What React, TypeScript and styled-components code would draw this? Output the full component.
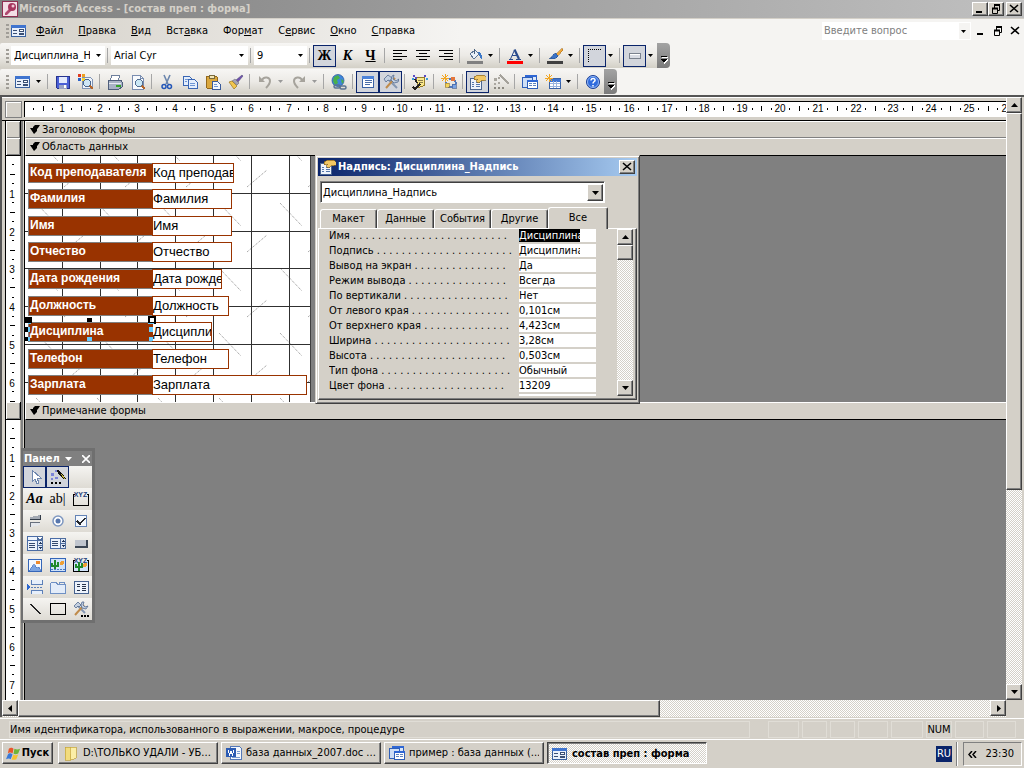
import React from 'react';
import styled, { createGlobalStyle, css } from 'styled-components';

const face = '#d4d0c8';
const navy = '#0a246a';
const hatch = css`
  background: repeating-conic-gradient(#ffffff 0 25%, ${face} 0 50%) 0 0 / 2px 2px;
`;
const raised = css`
  background: ${face};
  border: 1px solid;
  border-color: #ffffff #404040 #404040 #ffffff;
  box-shadow: inset -1px -1px 0 #808080;
`;

const Global = createGlobalStyle`
  *, *::before, *::after { box-sizing: border-box; }
  body {
    margin: 0;
    background: ${face};
    color: #000;
    font: 11px/14px "DejaVu Sans Condensed", "DejaVu Sans", sans-serif;
  }
  button, select, input { font: inherit; color: inherit; margin: 0; padding: 0; border: 0; border-radius: 0; background: none; }
  button { display: flex; align-items: center; justify-content: center; flex: none; }
  svg { display: block; flex: none; }
`;

/* ---------- icons ---------- */

const art: Record<string, React.ReactNode> = {
  key: (
    <>
      <rect width="16" height="16" fill="#8f2f52" />
      <rect x="1" y="1" width="14" height="14" fill="#f3dfe6" />
      <path d="M3 12l5-5 2 2-5 5H3z" fill="#b04a70" />
      <circle cx="10" cy="6" r="4" fill="#a8365e" />
      <circle cx="11" cy="5" r="1.5" fill="#f0c8d6" />
    </>
  ),
  form: (
    <>
      <rect x="0.5" y="2.500" width="14" height="11" fill="#e9f0fb" stroke="#38609f" />
      <rect x="0" y="2" width="15" height="3" fill="#3f74cf" />
      <path d="M2 7.500h4M2 10.500h4" stroke="#3a4f74" />
      <rect x="8.500" y="6.500" width="4" height="2" fill="#fff" stroke="#3a4f74" />
      <rect x="8.500" y="10.500" width="4" height="1" fill="#fff" stroke="#3a4f74" />
    </>
  ),
  save: (
    <>
      <path d="M1.500 2.500h13v12h-12l-1-1z" fill="#4a5fd6" stroke="#27348f" />
      <rect x="4" y="3" width="8" height="6" fill="#e4eafc" />
      <rect x="4" y="11" width="8" height="4" fill="#9aa2c4" />
      <rect x="9" y="11" width="2" height="3" fill="#fff" />
    </>
  ),
  search: (
    <>
      <path d="M4 3h8l2 2v9H4z" fill="#eef3fb" stroke="#7f93b5" />
      <rect x="0" y="0" width="3" height="3" fill="#e03a1e" />
      <rect x="4" y="0" width="3" height="3" fill="#f0a020" />
      <rect x="0" y="4" width="3" height="3" fill="#2c62c8" />
      <rect x="4" y="4" width="3" height="3" fill="#f4d030" />
      <circle cx="9" cy="9" r="3.5" fill="#cfe6f6" stroke="#49688f" />
      <path d="M12 12l3 3" stroke="#b5662a" strokeWidth="2" />
    </>
  ),
  print: (
    <>
      <path d="M5 1h8l-2 6H3z" fill="#fff" stroke="#6d7f9d" />
      <path d="M1 7l2-1h11l1 2v5l-3 2H1z" fill="#a9b3c6" stroke="#4f5e7b" />
      <path d="M2 9h12" stroke="#e7ebf3" />
      <rect x="9" y="11" width="5" height="2" fill="#35a528" />
    </>
  ),
  preview: (
    <>
      <path d="M2 1h8l3 3v11H2z" fill="#f8fafd" stroke="#7a8db0" />
      <path d="M10 1v3h3" fill="none" stroke="#7a8db0" />
      <circle cx="9" cy="9" r="3.5" fill="#cbe8f5" stroke="#536f92" />
      <path d="M12 12l3 3" stroke="#b5662a" strokeWidth="2" />
    </>
  ),
  cut: (
    <>
      <path d="M5 1l4 9M11 1L7 10" stroke="#6b86ad" strokeWidth="1.6" />
      <circle cx="5" cy="12.5" r="2" fill="none" stroke="#2457b8" strokeWidth="1.5" />
      <circle cx="10.5" cy="12.5" r="2" fill="none" stroke="#2457b8" strokeWidth="1.5" />
    </>
  ),
  copy: (
    <>
      <path d="M1 2h6l3 3v6H1z" fill="#e4eefc" stroke="#3a66b4" />
      <path d="M6 5h6l3 3v6H6z" fill="#e4eefc" stroke="#3a66b4" />
      <path d="M3 5h3M3 7h2M8 9h5M8 11h5" stroke="#6f96d4" />
    </>
  ),
  paste: (
    <>
      <rect x="1" y="2" width="11" height="12" rx="1" fill="#dba83e" stroke="#94691c" />
      <rect x="4" y="1" width="5" height="3" fill="#f4e6b4" stroke="#7a6a3c" />
      <path d="M7 7h5l3 3v5H7z" fill="#f2f6fd" stroke="#3a5b9b" />
      <path d="M9 10h3M9 12h4" stroke="#6f96d4" />
    </>
  ),
  painter: (
    <>
      <path d="M14 1l1 1-5 6-2-2z" fill="#6f4fb0" stroke="#4a4a6a" strokeWidth=".5" />
      <path d="M7 5l4 4-2 2-5-4z" fill="#a3a3b5" stroke="#5a5a6a" strokeWidth=".5" />
      <path d="M1 8l3-1 5 5-3 3z" fill="#f2c750" stroke="#9a7420" strokeWidth=".7" />
    </>
  ),
  undo: (
    <>
      <path d="M2 2v6h6z" fill="#a6a39c" />
      <path d="M5 6c2-4 8-3 8 1 0 3-2 5-4 7" fill="none" stroke="#a6a39c" strokeWidth="2" />
    </>
  ),
  redo: (
    <>
      <path d="M14 2v6H8z" fill="#a6a39c" />
      <path d="M11 6C9 2 3 3 3 7c0 3 2 5 4 7" fill="none" stroke="#a6a39c" strokeWidth="2" />
    </>
  ),
  globe: (
    <>
      <circle cx="7" cy="6.500" r="6" fill="#3f86dc" stroke="#245296" strokeWidth=".7" />
      <path d="M3 3l4-2 2 3-3 2 1 3-3 2-2-4zM10 5l3 2-2 3z" fill="#49b04b" />
      <rect x="3" y="11" width="6" height="3" rx="1.500" fill="none" stroke="#5b7391" strokeWidth="1.500" />
      <rect x="9" y="12" width="6" height="3" rx="1.500" fill="none" stroke="#5b7391" strokeWidth="1.500" />
    </>
  ),
  list: (
    <>
      <rect x="2.500" y="2.500" width="11" height="11" fill="#fff" stroke="#3a62a5" />
      <rect x="2" y="2" width="12" height="3" fill="#4d83d9" />
      <path d="M5 6.500h7M5 8.500h7M5 10.500h5" stroke="#4a6da8" />
    </>
  ),
  tools: (
    <>
      <path d="M4 4l10 10" stroke="#8596b0" strokeWidth="2" />
      <path d="M12 4L3 14" stroke="#c08c4c" strokeWidth="2" />
      <path d="M1 5l4-4 4 3-2 3-2-1-2 2z" fill="#c4d0e0" stroke="#536b90" strokeWidth=".8" />
      <path d="M11 1l-1 4 3 2 3-2-1 3-4 1-3-3 1-4z" fill="#c4d0e0" stroke="#536b90" strokeWidth=".8" />
    </>
  ),
  autoformat: (
    <>
      <path d="M4 4l8-1 1 8-7 3z" fill="#fae88b" stroke="#957c28" />
      <path d="M6 7l5-1M7 9l4-1" stroke="#8b7d4d" />
      <path d="M1 13l2 2 5-5M3 5l2 4" stroke="#222" strokeWidth="1.500" fill="none" />
      <path d="M1 1h2v2H1zM12 1h2v2h-2zM3 3h2v2H3z" fill="#5b4bc4" />
      <path d="M14 4h2v2h-2zM0 4h2v2H0z" fill="#3b9cd8" />
    </>
  ),
  code: (
    <>
      <path d="M4 0v8M0 4h8M1 1l6 6M7 1L1 7" stroke="#f2a622" />
      <path d="M5 8l3 5h4l3-4-2-4H8" fill="none" stroke="#5179bd" strokeWidth="1.500" />
      <rect x="10" y="3" width="4" height="4" fill="#e3763c" />
      <rect x="4" y="9" width="4" height="4" fill="#f4d45c" stroke="#94742a" strokeWidth=".6" />
      <rect x="11" y="10" width="4" height="4" fill="#7ba4e4" stroke="#34548d" strokeWidth=".6" />
    </>
  ),
  props: (
    <>
      <rect x="0.500" y="4.500" width="11" height="11" fill="#eef3fb" stroke="#4a6591" />
      <path d="M2 8.500h2M6 8.500h4M2 10.500h2M6 10.500h4M2 12.500h2M6 12.500h4" stroke="#5476ac" />
      <path d="M4 3l4-2h5l3 2v3l-5 1-3 2-2-2 2-2-4 1z" fill="#f1c764" stroke="#8a651d" strokeWidth=".7" />
    </>
  ),
  wandGray: (
    <>
      <path d="M7 1l9 9" stroke="#a5a29b" strokeWidth="2" />
      <path d="M1 4h3v3H1zM5 3h2v2H5zM5 8h2v2H5zM1 9h2v2H1z" fill="#aaa7a0" />
      <path d="M1 14h2M5 14h2M9 14h2" stroke="#8c8981" strokeWidth="2" />
    </>
  ),
  dbwin: (
    <>
      <rect x="3.500" y="1.500" width="11" height="9" fill="#dbe7f9" stroke="#2f5fb8" />
      <path d="M3 2h12" stroke="#2f67d4" strokeWidth="2" />
      <rect x="0.500" y="3.500" width="10" height="10" fill="#cfdff6" stroke="#2f5fb8" />
      <rect x="5.500" y="6.500" width="10" height="8" fill="#fff" stroke="#2f5fb8" />
      <path d="M5 7h11" stroke="#2f67d4" strokeWidth="2" />
      <path d="M7 9.500h3M11 9.500h3M7 11.500h3M11 11.500h3" stroke="#5f83bd" />
    </>
  ),
  newobj: (
    <>
      <rect x="4.500" y="4.500" width="11" height="10" fill="#fff" stroke="#3a62a5" />
      <path d="M4 6h12" stroke="#3f74cf" strokeWidth="3" />
      <path d="M8.500 7v7M11.500 7v7M5 9.500h10M5 12.500h10" stroke="#9ab4dd" />
      <path d="M4 0v8M0 4h8M1 1l6 6M7 1L1 7" stroke="#f2a622" />
    </>
  ),
  help: (
    <>
      <circle cx="8" cy="8" r="6.500" fill="#2f6bdd" stroke="#1c4096" />
      <circle cx="8" cy="8" r="5.500" fill="none" stroke="#a9c8f7" strokeWidth=".8" />
      <path d="M6 6.500c0-3 4.500-2.500 4 0-.2 1-2 1.300-2 3M8 11v1.500" fill="none" stroke="#fff" strokeWidth="1.500" />
    </>
  ),
  left: <path d="M1 2.500h14M1 5.500h9M1 8.500h14M1 11.500h9" stroke="#000" />,
  center: <path d="M1 2.500h14M4 5.500h8M1 8.500h14M4 11.500h8" stroke="#000" />,
  right: <path d="M1 2.500h14M6 5.500h9M1 8.500h14M6 11.500h9" stroke="#000" />,
  bucket: (
    <>
      <path d="M3 6l5-4 4 4-5 5z" fill="#eaf1f8" stroke="#5c7594" />
      <path d="M7 1v5" stroke="#4b627f" />
      <path d="M11 4c3 0 4 2 4 7-2-1-3-3-3-5z" fill="#3c78c8" />
      <rect x="0" y="13" width="16" height="3" fill="#808080" />
    </>
  ),
  fontcolor: (
    <>
      <path d="M3.500 11L7.500 2" fill="none" stroke="#2b4b8c" />
      <path d="M7.500 1.500L12 11" fill="none" stroke="#2b4b8c" strokeWidth="2.200" />
      <path d="M5 7.500h5M2 11.500h4M9 11.500h5" stroke="#2b4b8c" />
      <rect x="0" y="13" width="16" height="3" fill="#ff0000" />
    </>
  ),
  linecolor: (
    <>
      <path d="M15 0l1 2-5 6-2-2z" fill="#f0a83a" stroke="#9b6417" strokeWidth=".5" />
      <path d="M9 5l2 3c-1 3-6 3-9 3 3-1 3-5 7-6z" fill="#3b72c4" stroke="#234a86" strokeWidth=".5" />
      <rect x="0" y="13" width="16" height="3" fill="#404040" />
    </>
  ),
  border: <path d="M1 1.500h14M1.500 1v14" fill="none" stroke="#000" strokeDasharray="1 1" />,
  effect: (
    <>
      <rect x="2.500" y="5.500" width="11" height="5" fill="#d9dce4" stroke="#7b828e" />
      <path d="M3 6.500h10" stroke="#fff" />
    </>
  ),
  pointer: <path d="M5 1v12l3-3 2 5 2-1-2-5h4z" fill="#fff" stroke="#6f87ae" />,
  wand: (
    <>
      <path d="M7 1l8 9" stroke="#111" strokeWidth="2.500" />
      <path d="M11 5l4 5" stroke="#c4b83a" />
      <path d="M5 1h2v2H5zM1 4h3v3H1zM5 8h3v2H5zM1 9h2v2H1z" fill="#7c84d8" />
      <path d="M1 14h2M5 14h2M9 14h2" stroke="#000" strokeWidth="2" />
    </>
  ),
  group: <path d="M2 3.500H.5v11h15v-11H14" fill="none" stroke="#000" />,
  toggle: (
    <>
      <path d="M3 6h10V2L3 4z" fill="#a4aab4" />
      <path d="M3 6.500h10.500V2" fill="none" stroke="#333c49" />
      <path d="M3 10h10v2L3 14z" fill="#e4e7ec" />
      <path d="M3 9.500h10M3.500 9v5" fill="none" stroke="#68707d" />
    </>
  ),
  radio: (
    <>
      <circle cx="8" cy="8" r="5" fill="#fff" stroke="#7e97c0" strokeWidth="1.500" />
      <circle cx="8" cy="8" r="2.500" fill="#5877ad" />
    </>
  ),
  check: (
    <>
      <rect x="2.500" y="2.500" width="11" height="11" fill="#f4f8fd" stroke="#6383b5" />
      <path d="M4 8l3 3 5-6" fill="none" stroke="#23262c" strokeWidth="1.600" />
    </>
  ),
  combo: (
    <>
      <rect x="0.500" y="1.500" width="15" height="14" fill="#edf3fc" stroke="#4a6ca6" />
      <path d="M0 5.500h16" stroke="#4a6ca6" />
      <rect x="10" y="1" width="6" height="15" fill="#4f6d9e" />
      <rect x="11" y="6" width="4" height="4" fill="#dfe8f6" />
      <rect x="11" y="11" width="4" height="4" fill="#dfe8f6" />
      <path d="M2 8.500h6M2 10.500h6M2 12.500h6" stroke="#34496e" />
      <path d="M11 2h4l-2 3z" fill="#fff" />
      <path d="M11 9h4l-2-2zM11 12h4l-2 2z" fill="#22375c" />
    </>
  ),
  listbox: (
    <>
      <rect x="0.500" y="3.500" width="15" height="10" fill="#edf3fc" stroke="#4a6ca6" />
      <rect x="10" y="3" width="6" height="11" fill="#4f6d9e" />
      <rect x="11" y="4" width="4" height="4" fill="#dfe8f6" />
      <rect x="11" y="9" width="4" height="4" fill="#dfe8f6" />
      <path d="M2 6.500h6M2 8.500h6M2 10.500h6" stroke="#34496e" />
      <path d="M11 7h4l-2-2zM11 10h4l-2 2z" fill="#22375c" />
    </>
  ),
  button: (
    <>
      <rect x="2" y="5" width="12" height="7" fill="#c0c5ce" />
      <path d="M2 12h12V5" fill="none" stroke="#3c4654" strokeWidth="1.500" />
    </>
  ),
  image: (
    <>
      <rect x="1.500" y="2.500" width="13" height="12" fill="#f3f8ff" stroke="#3566b8" />
      <path d="M2 14l5-7 3 4 2-1 2 4z" fill="#7ba3e0" stroke="#3566b8" strokeWidth=".6" />
      <circle cx="11" cy="5.500" r="2" fill="#ee8a2e" />
    </>
  ),
  unbound: (
    <>
      <rect x="0.500" y="1.500" width="15" height="13" fill="#cfe2fa" stroke="#3566b8" />
      <path d="M1 12.500h14" stroke="#4c7bbd" strokeDasharray="2 1" />
      <path d="M5 3v9M2 6v3h6V5" fill="none" stroke="#1f8a2c" strokeWidth="2" />
      <circle cx="12" cy="6" r="2" fill="#f0a035" />
    </>
  ),
  bound: (
    <>
      <rect x="1" y="4" width="14" height="11" fill="#cfe2fa" />
      <path d="M6 5v9M3 7v3h6V6" fill="none" stroke="#1f8a2c" strokeWidth="2" />
      <circle cx="12" cy="8" r="2" fill="#f0a035" />
      <path d="M2 3.500H.5v11h15v-11H14" fill="none" stroke="#000" />
    </>
  ),
  pagebreak: (
    <>
      <path d="M4.500 1v4h11V1M4.500 15v-4h11v4" fill="#e7effa" stroke="#5d80b8" />
      <path d="M4 8.500h12" stroke="#5d80b8" strokeDasharray="2 1" />
      <path d="M0 5l3 3-3 3z" fill="#2c67cf" />
    </>
  ),
  tab: (
    <>
      <path d="M.5 14.500v-10l1-1h5l1 2h8v9z" fill="#e3ecf9" stroke="#6f90c4" />
      <path d="M9.500 5V3.500h5V5" fill="none" stroke="#6f90c4" />
    </>
  ),
  subform: (
    <>
      <rect x="1" y="2" width="14" height="12" fill="#edf3fc" stroke="#46628f" />
      <path d="M4 5.500h3M4 7.500h3M4 11.500h3M9 5.500h4M9 7.500h4M9 9.500h4M9 11.500h4" stroke="#26324a" />
    </>
  ),
  line: <path d="M3 3l11 10" stroke="#222" strokeWidth="1.300" />,
  rect: <rect x="0.500" y="2.500" width="15" height="11" fill="none" stroke="#000" />,
  more: (
    <>
      <path d="M4 4l8 8" stroke="#8596b0" strokeWidth="2" />
      <path d="M11 4L2 14" stroke="#c08c4c" strokeWidth="2" />
      <path d="M1 5l4-4 3 3-2 2-1-1-2 2zM11 1l-1 3 2 2 3-1-2 3-4-1-1-3 1-3z" fill="#c4d0e0" stroke="#536b90" strokeWidth=".8" />
      <path d="M8 15h2M11 15h2M14 15h2" stroke="#000" strokeWidth="2" />
    </>
  ),
  folder: (
    <>
      <path d="M2 2h5l1 1v12H2z" fill="#f2dc7e" stroke="#c2a23c" strokeWidth=".7" />
      <path d="M7 2h6v11l-5 2z" fill="#fbeea6" stroke="#c2a23c" strokeWidth=".7" />
    </>
  ),
  word: (
    <>
      <path d="M4.500 1.500h9l2 2v11h-11z" fill="#f3f7fd" stroke="#5378b8" />
      <path d="M11 6.500h3M11 8.500h3M6 12.500h8" stroke="#7a9bd0" />
      <rect x="0" y="3" width="10" height="9" fill="#2b5bb3" />
      <path d="M2 5l1.500 5L5 6l1.500 4L8 5" fill="none" stroke="#fff" />
    </>
  ),
  flag: (
    <>
      <path d="M3 3c2-2 4-1 5 0L7 8C5 6 3 7 2 8z" fill="#e8562a" />
      <path d="M9 3c2 1 4 1 6 0l-2 5c-2 1-4 1-5 0z" fill="#6fb536" />
      <path d="M2 9c1-1 3-2 5 0l-2 5c-1-1-3-1-5 0z" fill="#3a7ad8" />
      <path d="M8 9c1 1 3 1 5 0l-2 5c-2 1-4 1-5 0z" fill="#f6c22e" />
    </>
  ),
};

const smooth = ['help', 'radio', 'globe', 'flag', 'key', 'undo', 'redo', 'tools', 'more', 'cut', 'painter', 'fontcolor'];

const Icon = ({ name, size = 16 }: { name: string; size?: number }) => (
  <svg
    width={size}
    height={size}
    viewBox="0 0 16 16"
    shapeRendering={smooth.includes(name) ? 'auto' : 'crispEdges'}
    aria-hidden="true"
  >
    {art[name]}
  </svg>
);

const arrows = { down: 'M0 0h7L3.500 4z', up: 'M0 4h7L3.500 0z', left: 'M5 0v7L1 3.500z', right: 'M2 0v7l4-3.500z' };
const Arrow = ({ dir = 'down', small, color = '#000' }: { dir?: keyof typeof arrows; small?: boolean; color?: string }) => (
  <svg
    width={small ? 5 : 7}
    height={dir === 'left' || dir === 'right' ? 7 : small ? 3 : 4}
    viewBox={dir === 'left' || dir === 'right' ? '0 0 7 7' : '0 0 7 4'}
    aria-hidden="true"
  >
    <path d={arrows[dir]} fill={color} />
  </svg>
);

const Glyph = ({ kind }: { kind: 'min' | 'restore' | 'close' }) => (
  <svg width="10" height="10" viewBox="0 0 10 10" aria-hidden="true" fill="none" stroke="#000">
    {kind === 'min' && <path d="M1 8h6" strokeWidth="2" />}
    {kind === 'close' && <path d="M1 1l8 7M9 1L1 8" strokeWidth="1.600" />}
    {kind === 'restore' && (
      <>
        <path d="M3 1h6" strokeWidth="2" />
        <path d="M3.500 1v3M8.500 1v5.500H6.500M1.500 4v5.500h5V4" />
        <path d="M1 4.500h6" strokeWidth="2" />
      </>
    )}
  </svg>
);

/* ---------- application frame ---------- */

const Frame = styled.div`
  display: flex;
  flex-direction: column;
  min-height: 100vh;
  overflow: hidden;
`;
const TitleBar = styled.header`
  display: flex;
  align-items: center;
  height: 18px;
  padding: 0 2px;
  background: linear-gradient(90deg, #808080, #c0c0c0);
  color: ${face};
  font-weight: bold;
  h1 { flex: 1; margin: 0 0 0 1px; font-size: 11px; line-height: 16px; white-space: nowrap; }
`;
const CaptionButton = styled.button<{ $gap?: boolean }>`
  ${raised}
  width: 16px;
  height: 14px;
  margin-left: ${(p) => (p.$gap ? 2 : 0)}px;
`;
const CommandArea = styled.div`
  background: linear-gradient(90deg, ${face}, #f5f4f2 45%);
  border-top: 1px solid ${face};
  height: 77px;
`;
const MenuBar = styled.nav`
  display: flex;
  align-items: center;
  height: 24px;
  padding: 0 1px 0 6px;
`;
const Grip = styled.span`
  width: 3px;
  height: 14px;
  margin-right: 2px;
  background: repeating-linear-gradient(#a09d97 0 2px, transparent 2px 4px);
`;
const MenuItem = styled.button`
  padding: 3px 6px 3px 9px;
`;
const Spring = styled.span`
  flex: 1;
`;
const AskBox = styled.label`
  display: flex;
  align-items: center;
  width: 149px;
  height: 18px;
  margin-right: 1px;
  padding-right: 4px;
  background: linear-gradient(90deg, #fff 136px, #f5f4f2 136px);
  border: 1px solid #fff;
  input { flex: 1; min-width: 0; padding-left: 1px; outline: 0; }
  input::placeholder { color: #808080; opacity: 1; }
`;
const PlainButton = styled.button`
  width: 17px;
  height: 16px;
`;
const Toolbar = styled.div`
  display: flex;
  align-items: center;
  width: fit-content;
  height: 25px;
  margin-bottom: 1px;
  padding-left: 6px;
  border-radius: 2px 4px 4px 2px;
  background: linear-gradient(#f7f6f4, #eceae6 50%, #d3d0c7);
`;
const ToolButton = styled.button<{ $on?: boolean }>`
  width: 23px;
  height: 22px;
  ${(p) => p.$on && css`
    background: #d2d5dc;
    border: 1px solid ${navy};
  `}
`;
const DropButton = styled.button`
  width: 11px;
  height: 22px;
  padding-right: 2px;
`;
const Separator = styled.span`
  width: 6px;
  height: 15px;
  border-right: 3px solid transparent;
  background: linear-gradient(90deg, transparent 2px, #a6a6a6 2px);
  background-clip: padding-box;
`;
const BarCombo = styled.label<{ $w: number }>`
  display: flex;
  align-items: center;
  width: ${(p) => p.$w}px;
  height: 19px;
  padding: 0 4px 0 3px;
  background: #fff;
  select { appearance: none; flex: 1; min-width: 0; margin-right: 6px; outline: 0; overflow: hidden; }
`;
const BarEnd = styled.button`
  align-self: stretch;
  width: 13px;
  flex-direction: column;
  justify-content: flex-end;
  padding-bottom: 4px;
  border-radius: 0 4px 4px 0;
  background: linear-gradient(#a3a3a3, #7b7b7b);
`;
const Letter = styled.span<{ $kind: 'b' | 'i' | 'u' }>`
  font: bold 14px/16px "Liberation Serif", serif;
  font-style: ${(p) => (p.$kind === 'i' ? 'italic' : 'normal')};
  text-decoration: ${(p) => (p.$kind === 'u' ? 'underline' : 'none')};
`;

/* ---------- form designer ---------- */

const DocWindow = styled.main`
  flex: 1;
  display: flex;
  flex-direction: column;
  border: solid #555;
  border-width: 2px 0 0 2px;
`;
const DocBody = styled.div`
  flex: 1;
  display: flex;
  padding-right: 2px;
`;
const Designer = styled.section`
  position: relative;
  flex: 1;
  min-width: 0;
  display: flex;
  flex-direction: column;
`;
const RulerRow = styled.div`
  display: flex;
  height: 24px;
  padding: 3px 0 0 3px;
  border-top: 1px solid #fff;
  border-bottom: 1px solid #000;
`;
const Corner = styled.button`
  width: 17px;
  height: 17px;
  background: ${face};
  border: 1px solid #808080;
  box-shadow: inset 1px 1px 0 #fff;
`;
const TopRuler = styled.div`
  flex: 1;
  min-width: 0;
  height: 16px;
  margin-left: 2px;
  overflow: hidden;
  background: #fff;
  border-top: 1px solid #000;
  border-left: 1px solid #000;
`;
const Band = styled.div<{ $grow?: boolean; $h?: number }>`
  display: grid;
  grid-template-columns: 16px 4px 1fr;
  padding-left: 3px;
  ${(p) => (p.$grow ? 'flex: 1;' : '')}
  ${(p) => (p.$h ? `height: ${p.$h}px;` : '')}
`;
const BandSelector = styled.button<{ $line?: boolean }>`
  display: block;
  border: 1px solid #000;
  border-width: 0 1px ${(p) => (p.$line ? 1 : 0)}px;
  background: ${face};
  box-shadow: inset 1px 1px 0 #fff, inset -1px -1px 0 #808080;
`;
const SideRuler = styled.div`
  position: relative;
  min-height: 0;
  overflow: hidden;
  background: #fff;
  border-left: 1px solid #000;
  border-right: 1px solid #b4b0a8;
  svg { position: absolute; }
`;
const Gutter = styled.span`
  margin-right: 2px;
  border-right: 2px solid #808080;
`;
const BandHeader = styled.h2<{ $line?: boolean }>`
  display: flex;
  align-items: center;
  gap: 2px;
  margin: 0;
  padding-left: 4px;
  font-size: 11px;
  font-weight: normal;
  background: ${face};
  border: solid #fff;
  border-width: 1px 0 1px 1px;
  border-bottom-color: ${(p) => (p.$line ? '#000' : '#808080')};
  box-shadow: -1px 0 0 #000;
`;
const Desk = styled.div`
  min-width: 0;
  overflow: hidden;
  background: #808080;
  box-shadow: -1px 0 0 #000;
`;
const Surface = styled.div`
  position: relative;
  width: 286px;
  height: 100%;
  background: #fff;
  border-right: 1px solid #404040;
  > svg { position: absolute; }
`;
const CaptionBox = styled.span<{ $y: number }>`
  position: absolute;
  left: 3px;
  top: ${(p) => p.$y}px;
  width: 125px;
  height: 20px;
  padding-left: 1px;
  background: #993300;
  border: 1px solid #808080;
  border-right: 0;
  color: #fff;
  font: bold 12px/17px "Liberation Sans", sans-serif;
  white-space: nowrap;
`;
const FieldBox = styled(CaptionBox)<{ $w: number }>`
  left: 127px;
  width: ${(p) => p.$w}px;
  padding-left: 0;
  overflow: hidden;
  background: #fff;
  border: 1px solid #993300;
  color: #000;
  font-size: 13px;
  font-weight: normal;
`;
const Handles = styled.svg`
  left: 0;
  top: 160px;
`;

/* ---------- scroll bars ---------- */

const ScrollButton = styled.button`
  ${raised}
  width: 16px;
  height: 16px;
`;
const VScroll = styled.div`
  display: flex;
  flex-direction: column;
  width: 16px;
  ${hatch}
`;
const HScroll = styled.div`
  display: flex;
  height: 17px;
  margin-right: 18px;
  ${hatch}
`;
const Track = styled.div<{ $vertical?: boolean }>`
  flex: 1;
  display: flex;
  flex-direction: ${(p) => (p.$vertical ? 'column' : 'row')};
`;
const Thumb = styled.div<{ $size: string }>`
  ${raised}
  flex: 0 0 ${(p) => p.$size};
`;

/* ---------- property sheet ---------- */

const Dialog = styled.section`
  position: absolute;
  left: 313px;
  top: 58px;
  width: 325px;
  height: 249px;
  padding: 2px;
  background: ${face};
  border: 1px solid;
  border-color: ${face} #404040 #404040 ${face};
  box-shadow: inset 1px 1px 0 #fff, inset -1px -1px 0 #808080;
`;
const DialogTitle = styled.header`
  display: flex;
  align-items: center;
  height: 18px;
  padding: 0 2px;
  background: linear-gradient(90deg, ${navy}, #a6caf0);
  color: #fff;
  h2 { flex: 1; margin: 0 0 0 2px; font-size: 11px; white-space: nowrap; }
`;
const ObjectCombo = styled.label`
  display: flex;
  width: 285px;
  height: 22px;
  margin: 5px 0 0 2px;
  background: #fff;
  border: 1px solid;
  border-color: #808080 #fff #fff #808080;
  box-shadow: inset 1px 1px 0 #404040;
  padding: 2px 1px 1px 2px;
  select { appearance: none; flex: 1; outline: 0; }
`;
const ComboArrow = styled.span`
  ${raised}
  display: flex;
  align-items: center;
  justify-content: center;
  width: 16px;
`;
const Tabs = styled.div`
  display: flex;
  align-items: flex-end;
  height: 22px;
  margin: 3px 0 0 2px;
`;
const TabButton = styled.button<{ $on?: boolean }>`
  width: ${(p) => (p.$on ? 60 : 57)}px;
  height: ${(p) => (p.$on ? 22 : 19)}px;
  padding-bottom: ${(p) => (p.$on ? 2 : 0)}px;
  margin-bottom: ${(p) => (p.$on ? -1 : 0)}px;
  z-index: ${(p) => (p.$on ? 1 : 0)};
  background: ${face};
  border: solid;
  border-width: 1px 1px 0;
  border-color: #fff #404040 #fff #fff;
  border-radius: 3px 2px 0 0;
  box-shadow: inset -1px 0 0 #808080;
`;
const Sheet = styled.div`
  display: flex;
  justify-content: space-between;
  height: 172px;
  padding: 0 3px 3px 10px;
  border: 1px solid;
  border-color: #fff #404040 #404040 #fff;
  box-shadow: inset -1px -1px 0 #808080;
`;
const PropList = styled.div`
  width: 267px;
  overflow: hidden;
`;
const PropRow = styled.label`
  display: flex;
  height: 15px;
`;
const PropName = styled.span`
  width: 183px;
  margin-right: 7px;
  white-space: nowrap;
`;
const PropValue = styled.input`
  width: 77px;
  height: 13px;
  padding: 0 16px 0 0;
  background: #fff;
  line-height: 13px;
  outline: 0;
`;
const SelectedValue = styled(PropValue)`
  width: 61px;
  padding: 0;
  background: #000;
  color: #fff;
`;
const ValueTail = styled.span`
  width: 16px;
  height: 13px;
  background: #fff;
`;

/* ---------- toolbox ---------- */

const Toolbox = styled.aside`
  position: absolute;
  left: 19px;
  top: 351px;
  width: 74px;
  border: 3px solid #6f6f6f;
  border-left-width: 2px;
  background: #f0eeea;
`;
const ToolboxTitle = styled.header`
  display: flex;
  align-items: center;
  height: 15px;
  padding-left: 1px;
  background: #808080;
  color: #fff;
  font-weight: bold;
  svg { margin: 0 5px; }
  button { height: 15px; }
`;
const ToolGrid = styled.div`
  display: grid;
  grid-template-columns: repeat(3, 23px);
  grid-auto-rows: 22px;
  background: repeating-linear-gradient(#f5f4f1 0, #dedbd4 22px);
  > button { width: auto; }
`;
const AaMark = styled.span<{ $italic?: boolean }>`
  font: ${(p) => (p.$italic ? 'italic bold' : 'normal')} 14px/16px "Liberation Serif", serif;
`;
const XyzTool = styled.span`
  display: grid;
  > * { grid-area: 1 / 1; }
  span { font: bold 7px/7px "Liberation Sans", sans-serif; color: #24427c; justify-self: center; }
`;

/* ---------- status and task bars ---------- */

const StatusBar = styled.footer`
  display: flex;
  gap: 3px;
  height: 22px;
  padding: 3px 8px 1px 9px;
  border-top: 1px solid ${face};
  box-shadow: inset 0 1px 0 #fff;
`;
const StatusCell = styled.span<{ $w?: number }>`
  ${(p) => (p.$w ? `width: ${p.$w}px;` : 'flex: 1; margin-right: 15px;')}
  height: 17px;
  overflow: hidden;
  white-space: nowrap;
  line-height: 15px;
  border: 1px solid #e0ddd6;
  text-align: ${(p) => (p.$w ? 'center' : 'left')};
`;
const Taskbar = styled.footer`
  display: flex;
  align-items: flex-start;
  height: 29px;
  padding: 2px 2px 0;
  border-top: 1px solid #fff;
`;
const StartButton = styled.button`
  ${raised}
  width: 51px;
  height: 22px;
  gap: 1px;
  margin-right: 5px;
  font-weight: bold;
`;
const TaskButton = styled.button<{ $on?: boolean }>`
  ${raised}
  flex: 0 1 160px;
  min-width: 0;
  justify-content: flex-start;
  gap: 4px;
  height: 22px;
  margin-right: 3px;
  padding: 0 4px;
  ${(p) => p.$on && css`
    ${hatch}
    border-color: #404040 #fff #fff #404040;
    box-shadow: inset 1px 1px 0 #808080;
    font-weight: bold;
    padding-top: 2px;
  `}
  span { overflow: hidden; white-space: nowrap; }
`;
const Language = styled.button`
  width: 16px;
  height: 16px;
  margin: 4px 4px 0 0;
  background: ${navy};
  color: #fff;
`;
const Tray = styled.div`
  display: flex;
  align-items: center;
  justify-content: space-between;
  width: 59px;
  height: 24px;
  margin-left: 5px;
  padding: 0 7px 0 4px;
  border: 1px solid;
  border-color: #808080 #fff #fff #808080;
`;
const TrayLine = styled.span`
  width: 2px;
  height: 24px;
  border-left: 1px solid #808080;
  border-right: 1px solid #fff;
`;

/* ---------- data ---------- */

const menus: [string, string, string][] = [
  ['', 'Ф', 'айл'], ['', 'П', 'равка'], ['', 'В', 'ид'], ['Вст', 'а', 'вка'],
  ['Фор', 'м', 'ат'], ['С', 'е', 'рвис'], ['', 'О', 'кно'], ['', 'С', 'правка'],
];

const mainTools = [
  'form', 'v', '|', 'save', 'search', '|', 'print', 'preview', '|', 'cut', 'copy', 'paste', 'painter', '|',
  'undo', 'v-', 'redo', 'v-', '|', 'globe', '|', '*list', '*tools', '|', 'autoformat', '|', 'code', '|',
  '*props', 'wandGray', '|', 'dbwin', 'newobj', 'v', '|', 'help',
];
const formatTools = [
  'left', 'center', 'right', '|', 'bucket', 'v', '|', 'fontcolor', 'v', '|', 'linecolor', 'v', '|',
  '*border', 'v', '|', '*effect', 'v',
];

/* caption, visible field text, top, field width */
const fields: [string, string, number, number][] = [
  ['Код преподавателя', 'Код преподав', 7, 82],
  ['Фамилия', 'Фамилия', 33, 80],
  ['Имя', 'Имя', 60, 80],
  ['Отчество', 'Отчество', 86, 80],
  ['Дата рождения', 'Дата рожде', 113, 70],
  ['Должность', 'Должность', 140, 77],
  ['Дисциплина', 'Дисципли', 166, 60],
  ['Телефон', 'Телефон', 193, 77],
  ['Зарплата', 'Зарплата', 219, 155],
];

/* name, leader dots, value */
const properties: [string, number, string][] = [
  ['Имя', 25, 'Дисциплина_Надпись'],
  ['Подпись', 22, 'Дисциплина'],
  ['Вывод на экран', 15, 'Да'],
  ['Режим вывода', 16, 'Всегда'],
  ['По вертикали', 17, 'Нет'],
  ['От левого края', 16, '0,101см'],
  ['От верхнего края', 14, '4,423см'],
  ['Ширина', 22, '3,28см'],
  ['Высота', 22, '0,503см'],
  ['Тип фона', 21, 'Обычный'],
  ['Цвет фона', 19, '13209'],
  ['', 0, ''],
];

const toolboxItems = [
  '*pointer', '*wand', '', 'Aa', 'ab', 'xyz', 'toggle', 'radio', 'check', 'combo', 'listbox', 'button',
  'image', 'unbound', 'bound', 'pagebreak', 'tab', 'subform', 'line', 'rect', 'more',
];

/* ---------- composed parts ---------- */

const ToolItems = ({ items }: { items: string[] }) => (
  <>
    {items.map((item, i) => {
      if (item === '|') return <Separator key={i} />;
      if (item[0] === 'v') {
        return <DropButton key={i} aria-label="▾"><Arrow small color={item === 'v-' ? '#999' : '#000'} /></DropButton>;
      }
      const on = item[0] === '*';
      const name = on ? item.slice(1) : item;
      return <ToolButton key={i} $on={on} aria-label={name}><Icon name={name} /></ToolButton>;
    })}
  </>
);

const ToolbarEnd = () => (
  <BarEnd aria-label="▾">
    <svg width="8" height="8" viewBox="0 0 8 8" aria-hidden="true" shapeRendering="crispEdges">
      <path d="M2 1.500h6M4 7.500l4-4" stroke="#fff" />
      <path d="M1 0.500h6" stroke="#000" />
      <path d="M1 3h6L4 7z" fill="#000" />
    </svg>
  </BarEnd>
);

const CM = 378;
const mark = (tenths: number) => Math.round((tenths * CM) / 100);

/* Centimetre scale: numbers at whole units, a bar at each half and dots at each quarter. */
const Scale = ({ units, vertical }: { units: number; vertical?: boolean }) => {
  const length = mark((units + 1) * 10);
  const items: React.ReactNode[] = [];
  for (let n = 0; n <= units; n += 1) {
    const q1 = mark(n * 10 + 2.5);
    const half = mark(n * 10 + 5);
    const q3 = mark(n * 10 + 7.5);
    const here = mark(n * 10);
    items.push(
      <path
        key={`t${n}`}
        d={vertical
          ? `M6 ${q1 - 1}h2M4 ${half - 1}h5M6 ${q3 - 1}h2`
          : `M${q1} 6v2M${half} 4v5M${q3} 6v2`}
        transform={vertical ? 'translate(0 .5)' : 'translate(-.5 0)'}
        stroke="#000"
      />,
    );
    if (n > 0) {
      items.push(
        <text key={`n${n}`} x={vertical ? 6 : here - 1} y={vertical ? here + 4 : 10} textAnchor="middle">{n}</text>,
      );
    }
  }
  return (
    <svg
      width={vertical ? 14 : length}
      height={vertical ? length : 15}
      fontFamily='"Liberation Sans", sans-serif'
      fontSize="10"
      aria-hidden="true"
    >
      {items}
    </svg>
  );
};

const SectionBand = ({ title, h, line }: { title: string; h: number; line?: boolean }) => (
  <Band $h={h}>
    <BandSelector $line={line} aria-label={title} />
    <Gutter />
    <BandHeader $line={line}>
      <svg width="10" height="10" viewBox="0 0 10 10" aria-hidden="true">
        <path d="M10 0H5L3 2v1H0l4 6 3-3V4l1-1z" fill="#000" />
      </svg>
      {title}
    </BandHeader>
  </Band>
);

const FormSurface = () => (
  <Surface>
    <svg width="285" height="246" aria-hidden="true">
      <defs>
        <pattern id="weave" width="61" height="65" patternUnits="userSpaceOnUse">
          <path d="M11 47l22 23M11-18L33 5M39 31l20-17" stroke="#8c8c8c" strokeDasharray="1 1" />
        </pattern>
      </defs>
      <rect width="285" height="246" fill="url(#weave)" />
      <g stroke="#303030" transform="translate(-.5 -.5)">
        {[1, 2, 3, 4, 5, 6, 7].map((n) => <path key={n} d={`M${mark(n * 10)} 0v247`} />)}
        {[1, 2, 3, 4, 5, 6].map((n) => <path key={n} d={`M0 ${mark(n * 10)}h286`} />)}
      </g>
    </svg>
    {fields.map(([caption, text, y, w]) => (
      <React.Fragment key={caption}>
        <CaptionBox $y={y}>{caption}</CaptionBox>
        <FieldBox $y={y} $w={w}>{text}</FieldBox>
      </React.Fragment>
    ))}
    <Handles width="132" height="26" viewBox="0 0 132 26" aria-hidden="true">
      <path d="M0 1h7v6H0zM62 2h5v4h-5zM0 11h3v5H0zM0 21h3v4H0z" fill="#000" />
      <rect x="124" y="1" width="6" height="6" fill="#fff" stroke="#000" strokeWidth="2" />
      <path d="M62 21h5v4h-5zM3 7h3v1H3zM3 11h2v5H3zM3 21h2v4H3zM124 11h4v5h-4zM124 21h4v4h-4zM123 7h6v1h-6z" fill="#66ccff" />
    </Handles>
  </Surface>
);

const PropertySheet = () => (
  <Dialog>
    <DialogTitle>
      <Icon name="props" />
      <h2>Надпись: Дисциплина_Надпись</h2>
      <CaptionButton aria-label="Закрыть"><Glyph kind="close" /></CaptionButton>
    </DialogTitle>
    <ObjectCombo>
      <select aria-label="Объект"><option>Дисциплина_Надпись</option></select>
      <ComboArrow><Arrow /></ComboArrow>
    </ObjectCombo>
    <Tabs role="tablist">
      {['Макет', 'Данные', 'События', 'Другие', 'Все'].map((t) => (
        <TabButton key={t} role="tab" aria-selected={t === 'Все'} $on={t === 'Все'}>{t}</TabButton>
      ))}
    </Tabs>
    <Sheet>
      <PropList>
        {properties.map(([name, dots, value], i) => (
          <PropRow key={name}>
            <PropName>{name}{' .'.repeat(dots)}</PropName>
            {i === 0 ? (
              <>
                <SelectedValue defaultValue={value} />
                <ValueTail />
              </>
            ) : (
              <PropValue defaultValue={value} />
            )}
          </PropRow>
        ))}
      </PropList>
      <VScroll>
        <ScrollButton aria-label="▲"><Arrow dir="up" /></ScrollButton>
        <Track $vertical><Thumb $size="15px" /></Track>
        <ScrollButton aria-label="▼"><Arrow /></ScrollButton>
      </VScroll>
    </Sheet>
  </Dialog>
);

const ToolPalette = () => (
  <Toolbox>
    <ToolboxTitle>
      Панел
      <Arrow color="#fff" />
      <button aria-label="Закрыть">
        <svg width="8" height="8" viewBox="0 0 8 8" aria-hidden="true">
          <path d="M0 0l8 8M8 0L0 8" stroke="#fff" strokeWidth="1.600" />
        </svg>
      </button>
    </ToolboxTitle>
    <ToolGrid>
      {toolboxItems.map((item, i) => {
        if (!item) return <span key={i} />;
        const on = item[0] === '*';
        const name = on ? item.slice(1) : item;
        return (
          <ToolButton key={i} $on={on} aria-label={name}>
            {name === 'Aa' && <AaMark $italic>Aa</AaMark>}
            {name === 'ab' && <AaMark>ab|</AaMark>}
            {(name === 'xyz' || name === 'bound') && (
              <XyzTool><Icon name={name === 'xyz' ? 'group' : 'bound'} /><span>XYZ</span></XyzTool>
            )}
            {!['Aa', 'ab', 'xyz', 'bound'].includes(name) && <Icon name={name} />}
          </ToolButton>
        );
      })}
    </ToolGrid>
  </Toolbox>
);

export default function App() {
  return (
    <Frame>
      <Global />
      <TitleBar>
        <Icon name="key" />
        <h1>Microsoft Access - [состав преп : форма]</h1>
        <CaptionButton aria-label="Свернуть"><Glyph kind="min" /></CaptionButton>
        <CaptionButton aria-label="Восстановить"><Glyph kind="restore" /></CaptionButton>
        <CaptionButton $gap aria-label="Закрыть"><Glyph kind="close" /></CaptionButton>
      </TitleBar>

      <CommandArea>
        <MenuBar>
          <Grip />
          <Icon name="form" />
          {menus.map(([a, u, b]) => (
            <MenuItem key={a + u + b}><span>{a}<u>{u}</u>{b}</span></MenuItem>
          ))}
          <Spring />
          <AskBox>
            <input aria-label="Вопрос" placeholder="Введите вопрос" />
            <Arrow small />
          </AskBox>
          <PlainButton aria-label="Свернуть"><Glyph kind="min" /></PlainButton>
          <PlainButton aria-label="Восстановить"><Glyph kind="restore" /></PlainButton>
          <PlainButton aria-label="Закрыть"><Glyph kind="close" /></PlainButton>
        </MenuBar>
        <Toolbar>
          <Grip />
          <BarCombo $w={94}>
            <select aria-label="Объект"><option>Дисциплина_Надпись</option></select>
            <Arrow small />
          </BarCombo>
          <Separator />
          <BarCombo $w={137}>
            <select aria-label="Шрифт"><option>Arial Cyr</option></select>
            <Arrow small />
          </BarCombo>
          <Separator />
          <BarCombo $w={53}>
            <select aria-label="Размер шрифта"><option>9</option></select>
            <Arrow small />
          </BarCombo>
          <Separator />
          <ToolButton $on><Letter $kind="b">Ж</Letter></ToolButton>
          <ToolButton><Letter $kind="i">К</Letter></ToolButton>
          <ToolButton><Letter $kind="u">Ч</Letter></ToolButton>
          <Separator />
          <ToolItems items={formatTools} />
          <ToolbarEnd />
        </Toolbar>
        <Toolbar>
          <Grip />
          <ToolItems items={mainTools} />
          <ToolbarEnd />
        </Toolbar>
      </CommandArea>

      <DocWindow>
        <DocBody>
          <Designer>
            <RulerRow>
              <Corner aria-label="Форма" />
              <TopRuler><Scale units={26} /></TopRuler>
            </RulerRow>
            <SectionBand title="Заголовок формы" h={17} />
            <SectionBand title="Область данных" h={18} line />
            <Band $h={246}>
              <SideRuler><Scale units={6} vertical /></SideRuler>
              <Gutter />
              <Desk><FormSurface /></Desk>
            </Band>
            <SectionBand title="Примечание формы" h={18} line />
            <Band $grow>
              <SideRuler><Scale units={7} vertical /></SideRuler>
              <Gutter />
              <Desk />
            </Band>
            <PropertySheet />
            <ToolPalette />
          </Designer>
          <VScroll>
            <ScrollButton aria-label="▲"><Arrow dir="up" /></ScrollButton>
            <Track $vertical><Thumb $size="66%" /></Track>
            <ScrollButton aria-label="▼"><Arrow /></ScrollButton>
          </VScroll>
        </DocBody>
        <HScroll>
          <ScrollButton aria-label="◄"><Arrow dir="left" /></ScrollButton>
          <Track><Thumb $size="66%" /></Track>
          <ScrollButton aria-label="►"><Arrow dir="right" /></ScrollButton>
        </HScroll>
      </DocWindow>

      <StatusBar>
        <StatusCell>Имя идентификатора, использованного в выражении, макросе, процедуре</StatusCell>
        <StatusCell $w={31} />
        <StatusCell $w={25} />
        <StatusCell $w={25} />
        <StatusCell $w={30} />
        <StatusCell $w={32} />
        <StatusCell $w={26}>NUM</StatusCell>
        <StatusCell $w={29} />
        <StatusCell $w={29} />
      </StatusBar>

      <Taskbar>
        <StartButton><Icon name="flag" size={15} />Пуск</StartButton>
        <TaskButton><Icon name="folder" /><span>D:\ТОЛЬКО УДАЛИ - УБ...</span></TaskButton>
        <TaskButton><Icon name="word" /><span>база данных_2007.doc ...</span></TaskButton>
        <TaskButton><Icon name="dbwin" /><span>пример : база данных (...</span></TaskButton>
        <TaskButton $on><Icon name="form" /><span>состав преп : форма</span></TaskButton>
        <Spring />
        <Language>RU</Language>
        <TrayLine />
        <Tray>
          <svg width="9" height="7" viewBox="0 0 9 7" aria-hidden="true">
            <path d="M4 0L1 3.500 4 7M8 0L5 3.500 8 7" fill="none" stroke="#000" strokeWidth="1.500" />
          </svg>
          <time>23:30</time>
        </Tray>
      </Taskbar>
    </Frame>
  );
}
